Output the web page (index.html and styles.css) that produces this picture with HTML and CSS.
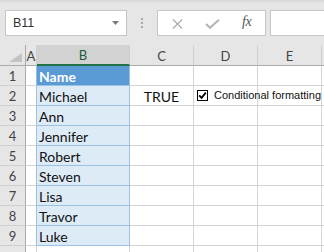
FILE: index.html
```html
<!DOCTYPE html>
<html>
<head>
<meta charset="utf-8">
<link rel="stylesheet" href="styles.css">
</head>
<body>
<div class="app">
  <div class="toolbar">
    <div class="namebox">
      <span class="nb-text">B11</span>
      <svg class="nb-arrow" width="7" height="4" viewBox="0 0 7 4"><path d="M0 0H7L3.5 4Z" fill="#7a7a7a"/></svg>
    </div>
    <div class="sep"><i></i><i></i><i></i></div>
    <div class="fbtns">
      <svg class="ico-x" width="11" height="10" viewBox="0 0 11 10"><path d="M1 0.5L10 9.5M10 0.5L1 9.5" stroke="#ababab" stroke-width="1.2" fill="none"/></svg>
      <svg class="ico-ok" width="15" height="10" viewBox="0 0 15 10"><path d="M1 5L5 8.8L14 0.8" stroke="#b3b3b3" stroke-width="2" fill="none"/></svg>
      <span class="ico-fx">fx</span>
    </div>
    <div class="finput"></div>
  </div>

  <div class="sheet">
    <div class="hd corner"><svg width="13" height="9" viewBox="0 0 13 9"><path d="M13 0V9H0Z" fill="#c3c3c3"/></svg></div>
    <div class="hd">A</div>
    <div class="hd sel">B</div>
    <div class="hd">C</div>
    <div class="hd">D</div>
    <div class="hd">E</div>
    <div class="hd last"></div>

    <div class="rh">1</div><div class="c a"></div><div class="c b name">Name</div><div class="c"></div><div class="c"></div><div class="c"></div><div class="c last"></div>
    <div class="rh">2</div><div class="c a"></div><div class="c b">Michael</div><div class="c ctr">TRUE</div><div class="c"></div><div class="c"></div><div class="c last"></div>
    <div class="rh">3</div><div class="c a"></div><div class="c b">Ann</div><div class="c"></div><div class="c"></div><div class="c"></div><div class="c last"></div>
    <div class="rh">4</div><div class="c a"></div><div class="c b">Jennifer</div><div class="c"></div><div class="c"></div><div class="c"></div><div class="c last"></div>
    <div class="rh">5</div><div class="c a"></div><div class="c b">Robert</div><div class="c"></div><div class="c"></div><div class="c"></div><div class="c last"></div>
    <div class="rh">6</div><div class="c a"></div><div class="c b">Steven</div><div class="c"></div><div class="c"></div><div class="c"></div><div class="c last"></div>
    <div class="rh">7</div><div class="c a"></div><div class="c b">Lisa</div><div class="c"></div><div class="c"></div><div class="c"></div><div class="c last"></div>
    <div class="rh">8</div><div class="c a"></div><div class="c b">Travor</div><div class="c"></div><div class="c"></div><div class="c"></div><div class="c last"></div>
    <div class="rh">9</div><div class="c a"></div><div class="c b">Luke</div><div class="c"></div><div class="c"></div><div class="c"></div><div class="c last"></div>
    <div class="rh"></div><div class="c"></div><div class="c"></div><div class="c"></div><div class="c"></div><div class="c"></div><div class="c last"></div>
  </div>

  <label class="chk">
    <span class="chk-box"><svg width="9" height="9" viewBox="0 0 9 9"><path d="M1.2 4.4L3.6 6.8L7.8 1.6" stroke="#000" stroke-width="1.8" fill="none"/></svg></span>
    <span class="chk-label">Conditional formatting</span>
  </label>
</div>
</body>
</html>
```
FILE: styles.css
```css
* { box-sizing: border-box; }
html, body { margin: 0; padding: 0; }
body {
  width: 324px;
  height: 252px;
  overflow: hidden;
  background: #ffffff;
  font-family: Lato, "Liberation Sans", sans-serif;
}
.app {
  position: relative;
  width: 324px;
  height: 252px;
  overflow: hidden;
}

/* toolbar */
.toolbar {
  height: 45px;
  display: flex;
  align-items: flex-start;
  padding: 10px 0 0 5px;
  background: linear-gradient(#d8d8d8 0, #e4e4e4 3px, #e6e6e6 4px);
}
.namebox {
  width: 122px;
  height: 26px;
  background: #fff;
  border: 1px solid #c6c6c6;
  display: flex;
  align-items: center;
  justify-content: space-between;
  padding: 0 7px 1px 7px;
}
.nb-text {
  font-family: "Liberation Sans", Arial, sans-serif;
  font-size: 12.5px;
  color: #333;
}
.nb-arrow { margin-top: 1px; }
.sep {
  width: 30px;
  height: 26px;
  display: flex;
  flex-direction: column;
  align-items: center;
  justify-content: center;
  gap: 2px;
}
.sep i {
  display: block;
  width: 2px;
  height: 2px;
  background: #a8a8a8;
}
.fbtns {
  width: 109px;
  height: 26px;
  background: #fff;
  border: 1px solid #c6c6c6;
  position: relative;
  display: flex;
  align-items: center;
  padding-left: 14px;
}
.ico-x { margin-top: 1px; }
.ico-ok { margin-left: 22px; margin-top: 1px; }
.ico-fx {
  margin-left: 22px;
  font-family: "Liberation Serif", "Times New Roman", serif;
  font-style: italic;
  font-size: 14px;
  color: #555;
  letter-spacing: -0.5px;
  margin-top: -2px;
}
.finput {
  flex: 1;
  height: 26px;
  margin-left: 4px;
  background: #fff;
  border: 1px solid #c6c6c6;
  border-right: none;
}

/* sheet */
.sheet {
  display: grid;
  grid-template-columns: 26px 11px 93px 64px 64px 64px 1fr;
  grid-template-rows: 21px repeat(10, 20px);
}
.hd {
  background: #e6e6e6;
  border-right: 1px solid #cfcfcf;
  border-bottom: 1px solid #ababab;
  display: flex;
  align-items: center;
  justify-content: center;
  font-size: 13px;
  color: #444;
  padding-top: 1px;
}
.hd.corner {
  align-items: flex-end;
  justify-content: flex-end;
  padding: 0 3px 3px 0;
  border-right-color: #ababab;
}
.hd.sel {
  background: #d2d2d2;
  border-bottom: 2px solid #217346;
  color: #1d5b37;
}
.hd.last { border-right: none; }
.rh {
  background: #e6e6e6;
  border-right: 1px solid #ababab;
  border-bottom: 1px solid #cfcfcf;
  display: flex;
  align-items: center;
  justify-content: center;
  font-size: 13px;
  color: #444;
  padding-top: 1px;
}
.c {
  border-right: 1px solid #d4d4d4;
  border-bottom: 1px solid #d4d4d4;
  font-size: 14px;
  color: #111;
  line-height: 19px;
  padding: 1px 0 0 2px;
  white-space: nowrap;
}
.c.last { border-right: none; }
.c.a { border-right-color: #9bc2e6; }
.c.b {
  background: #ddebf7;
  border-right-color: #9bc2e6;
  border-bottom-color: #9bc2e6;
}
.c.b.name {
  background: #5b9bd5;
  color: #fff;
  font-weight: bold;
}
.c.ctr { text-align: center; padding-left: 0; }

/* floating checkbox control */
.chk {
  position: absolute;
  left: 197px;
  top: 89px;
  display: flex;
  align-items: center;
  white-space: nowrap;
}
.chk-box {
  width: 11px;
  height: 11px;
  border: 1px solid #000;
  background: #fff;
  display: flex;
  align-items: center;
  justify-content: center;
}
.chk-label {
  margin-left: 6px;
  font-family: "Liberation Sans", Arial, sans-serif;
  font-size: 11px;
  color: #111;
}
```
